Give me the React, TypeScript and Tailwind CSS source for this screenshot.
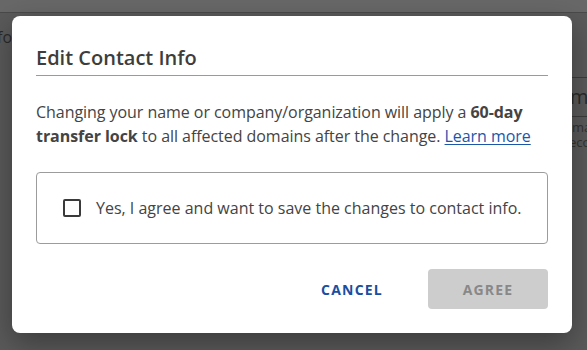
export default function App() {
  const font = { fontFamily: '"Open Sans", "Noto Sans", sans-serif' };

  return (
    <div className="relative w-[587px] h-[350px] overflow-hidden bg-[#5a5a5a]" style={font}>
      {/* page behind the overlay */}
      <div className="h-[13px] bg-[#686868] border-b border-[#4a4a4a]" />
      <div className="flex justify-between">
        <div className="pt-[12px] -ml-[3px] text-[16px] leading-[24px] text-[#2a2a2a]">fo</div>
        <div className="w-[15px] mt-[64px]">
          <div className="border-t border-[#3c3c3c] h-[39px] flex items-center text-[20px] text-[#2a2a2a] -ml-[2px]">m</div>
          <div className="border-t border-[#3c3c3c] pt-[3px] text-[13px] leading-[15px] text-[#333]">
            <div>ma</div>
            <div className="-ml-[3px]">eco</div>
          </div>
        </div>
      </div>

      {/* modal */}
      <div className="absolute left-[12px] top-[16px] w-[560px] bg-white rounded-[8px] shadow-[0_10px_30px_rgba(0,0,0,0.35)] px-6 pt-[28px] pb-6">
        <h2 className="text-[20px] leading-[28px] font-semibold text-[#3d3d3d] pb-[3px] border-b border-[#9a9a9a]">
          Edit Contact Info
        </h2>
        <p className="mt-[24px] text-[16px] leading-[24px] text-[#444] tracking-[-0.05px]">
          Changing your name or company/organization will apply a <b className="font-bold">60-day transfer lock</b> to all affected domains after the change.{' '}
          <a className="text-[#1c56ab] underline underline-offset-2">Learn more</a>
        </p>
        <label className="mt-[24px] flex items-center gap-[15px] border border-[#9c9c9c] rounded-[4px] pl-[26px] py-[23px]">
          <span className="w-[18px] h-[18px] border-2 border-[#3a3a3a] rounded-[2px] shrink-0" />
          <span className="text-[16px] leading-[24px] text-[#444]">Yes, I agree and want to save the changes to contact info.</span>
        </label>
        <div className="mt-[25px] flex justify-end gap-4">
          <button className="w-[120px] h-[40px] text-[14px] font-bold tracking-[1.2px] text-[#1a4ea0]">CANCEL</button>
          <button className="w-[120px] h-[40px] rounded-[4px] bg-[#cdcdcd] text-[14px] font-bold tracking-[1.2px] text-[#888]">AGREE</button>
        </div>
      </div>
    </div>
  );
}
